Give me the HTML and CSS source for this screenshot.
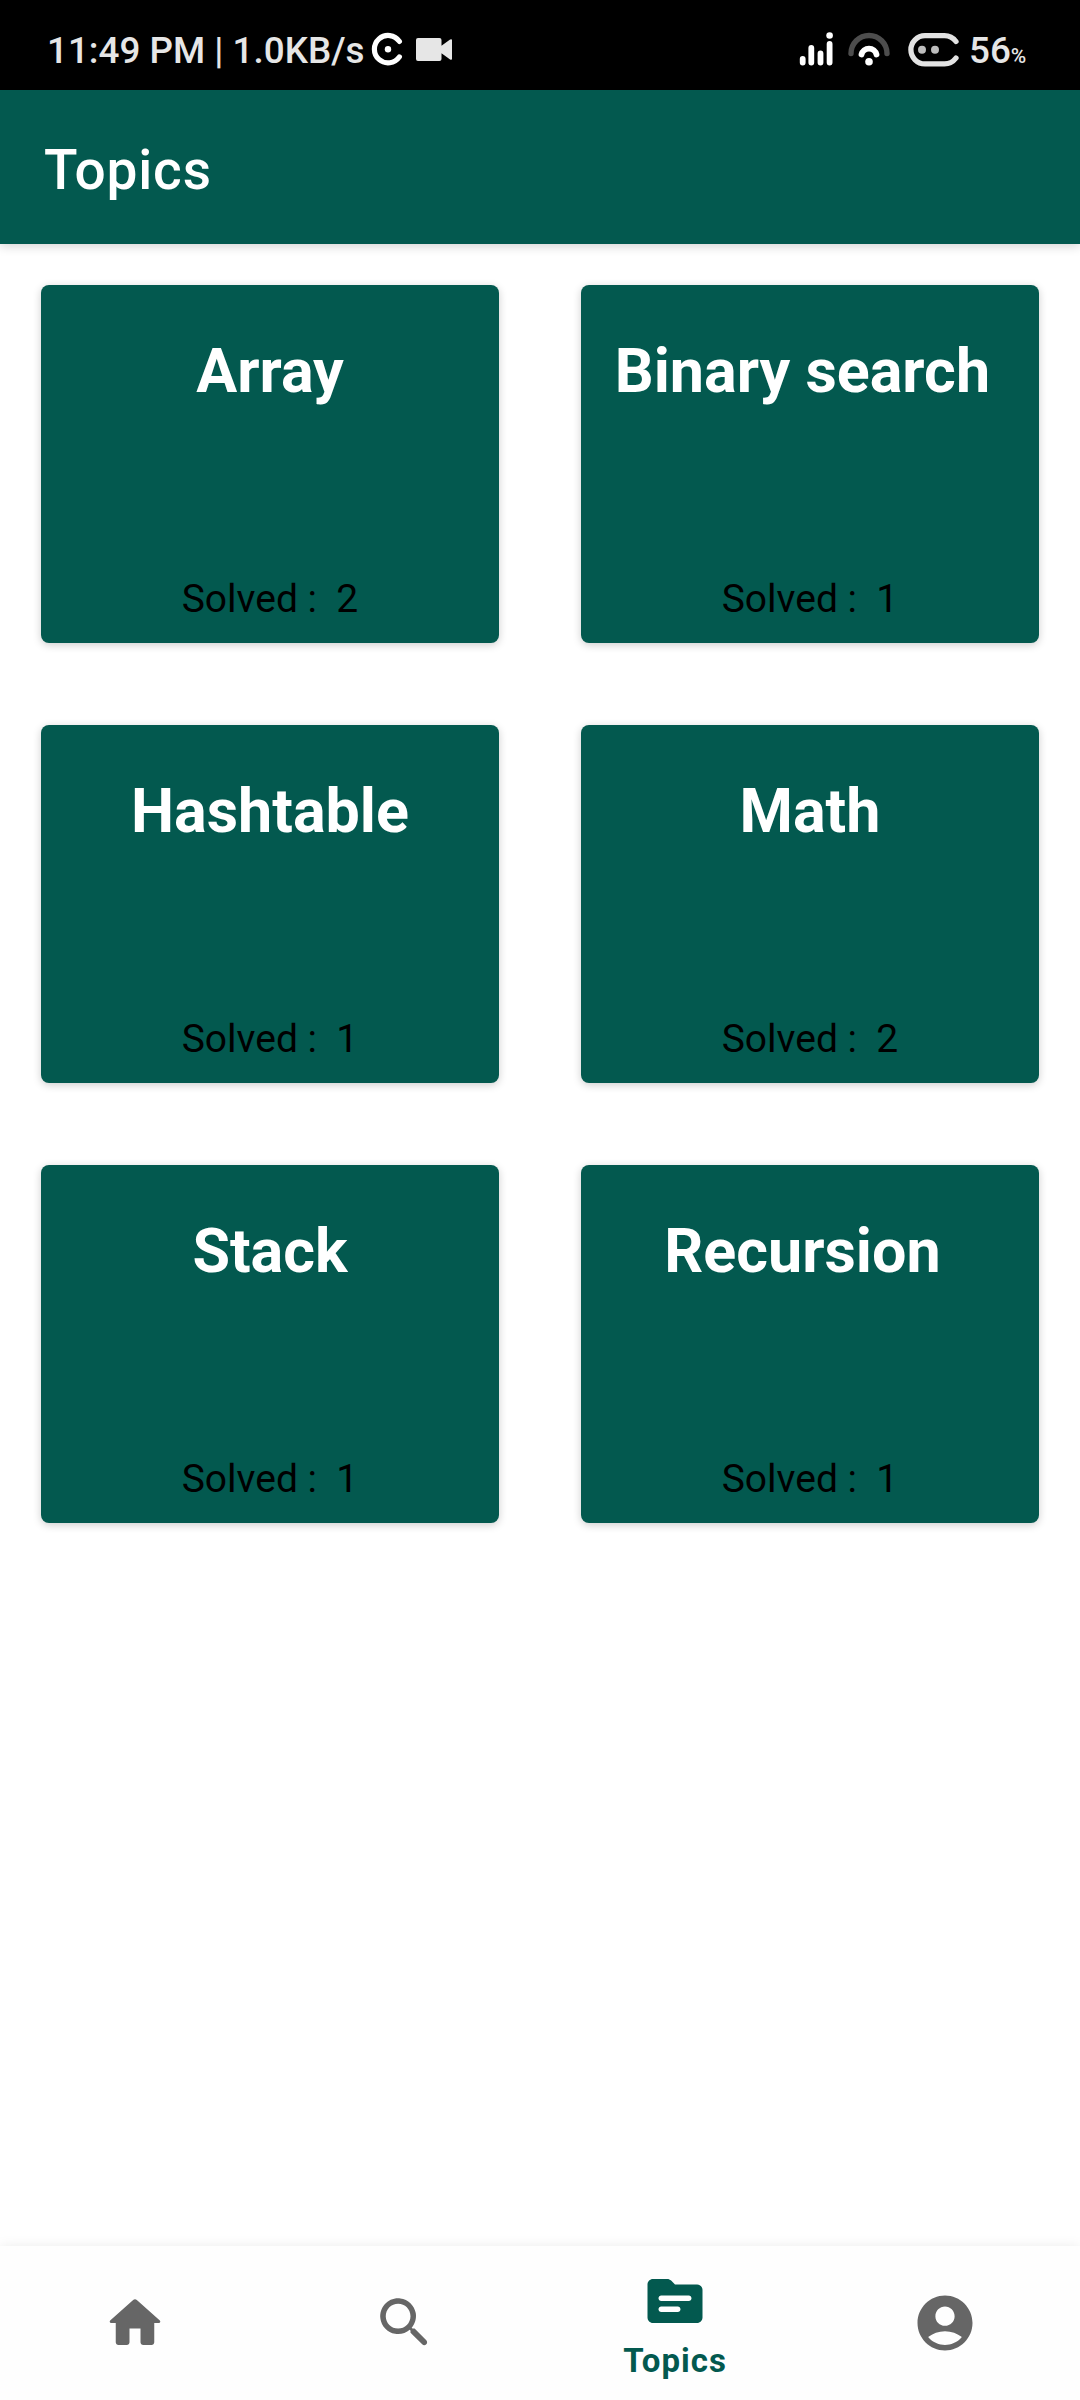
FILE: index.html
```html
<!DOCTYPE html>
<html lang="en">
<head>
<meta charset="utf-8">
<title>Topics</title>
<link rel="stylesheet" href="styles.css">
</head>
<body>
<div class="screen">
  <div class="status">
    <span class="status-text">11:49 PM | 1.0KB/s</span>
    <svg class="status-left" width="90" height="90" viewBox="368 0 90 90">
      <path d="M399.4 41.4A13.7 13.7 0 1 0 399.4 56.9" fill="none" stroke="#fff" stroke-width="5.2" stroke-linecap="round"/>
      <circle cx="388" cy="49.3" r="3.2" fill="#fff"/>
      <path d="M418 38h21.5a2 2 0 0 1 2 2v5.8l8.600-6.200q1.900-1.200 1.900.8v18.200q0 2-1.900.8l-8.600-6.200V59a2 2 0 0 1-2 2H418a2 2 0 0 1-2-2V40a2 2 0 0 1 2-2z" fill="#e6e6e6"/>
    </svg>
    <svg class="status-right" width="166" height="90" viewBox="796 0 166 90">
      <g stroke="#fff" stroke-width="5.8" stroke-linecap="round" fill="none">
        <path d="M802.7 59v3.500M811.3 48v14.500M820.5 53.500v9M829.6 44v18.500"/>
        <path d="M861.500 54.500a7.700 7.700 0 0 1 15 0"/>
        <path d="M851 53.500a18 18 0 0 1 36 0" stroke="#4d4d4d" stroke-width="5.400"/>
      </g>
      <circle cx="829.6" cy="35.500" r="3.300" fill="#fff"/>
      <circle cx="869" cy="61.700" r="3.800" fill="#fff"/>
      <path d="M956 41.500Q951.500 35.700 944.500 35.700H925a14 14 0 0 0 0 28.200H944.500Q951.500 63.900 956 58" fill="none" stroke="#e3e3e3" stroke-width="5.300" stroke-linecap="round"/>
      <circle cx="922" cy="49.800" r="4" fill="#bdbdbd"/>
      <circle cx="935" cy="49.800" r="4" fill="#bdbdbd"/>
    </svg>
    <span class="battery">56<span class="percent">%</span></span>
  </div>
  <header class="appbar"><h1 class="title">Topics</h1></header>
  <main class="grid">
    <section class="card"><h2 class="name">Array</h2><p class="solved">Solved :&nbsp; 2</p></section>
    <section class="card"><h2 class="name">Binary search&nbsp;</h2><p class="solved">Solved :&nbsp; 1</p></section>
    <section class="card"><h2 class="name">Hashtable</h2><p class="solved">Solved :&nbsp; 1</p></section>
    <section class="card"><h2 class="name">Math</h2><p class="solved">Solved :&nbsp; 2</p></section>
    <section class="card"><h2 class="name">Stack</h2><p class="solved">Solved :&nbsp; 1</p></section>
    <section class="card"><h2 class="name">Recursion&nbsp;</h2><p class="solved">Solved :&nbsp; 1</p></section>
  </main>
  <nav class="nav">
    <a class="tab"><svg class="icon" viewBox="0 0 24 24"><path d="M10 19v-5h4v5c0 .55.45 1 1 1h3c.55 0 1-.45 1-1v-7h1.700c.46 0 .68-.57.33-.87L12.670 3.600c-.38-.34-.96-.34-1.340 0l-8.360 7.530c-.34.3-.13.87.33.87H5v7c0 .55.45 1 1 1h3c.55 0 1-.45 1-1z"/></svg></a>
    <a class="tab"><svg class="icon" viewBox="0 0 24 24"><path d="M15.5 14h-.79l-.28-.27c1.200-1.400 1.820-3.310 1.480-5.340-.47-2.780-2.790-5-5.590-5.340-4.230-.52-7.790 3.040-7.270 7.270.34 2.800 2.560 5.120 5.340 5.590 2.030.34 3.940-.28 5.340-1.480l.27.28v.79l4.250 4.250c.41.41 1.080.41 1.490 0 .41-.41.41-1.080 0-1.490L15.5 14zm-6 0C7.010 14 5 11.990 5 9.500S7.010 5 9.500 5 14 7.010 14 9.500 11.990 14 9.500 14z"/></svg></a>
    <a class="tab active"><svg class="icon" viewBox="0 0 24 24"><path fill-rule="evenodd" d="M20 6h-8l-1.410-1.410C10.210 4.210 9.700 4 9.170 4H4c-1.100 0-2 .9-2 2v12c0 1.100.9 2 2 2h16c1.100 0 2-.9 2-2V8c0-1.100-.9-2-2-2zM13 16H7c-.55 0-1-.45-1-1s.45-1 1-1h6c.55 0 1 .45 1 1s-.45 1-1 1zM17 12H7c-.55 0-1-.45-1-1s.45-1 1-1h10c.55 0 1 .45 1 1s-.45 1-1 1z"/></svg><span class="label">Topics</span></a>
    <a class="tab"><svg class="icon" viewBox="0 0 24 24"><path fill-rule="evenodd" d="M12 2C6.480 2 2 6.480 2 12s4.480 10 10 10 10-4.480 10-10S17.520 2 12 2zm0 4c1.930 0 3.500 1.570 3.500 3.500S13.930 13 12 13s-3.500-1.570-3.500-3.500S10.070 6 12 6zm0 14c-2.030 0-4.430-.82-6.140-2.880C7.550 15.800 9.680 15 12 15s4.450.8 6.140 2.120C16.430 19.180 14.030 20 12 20z"/></svg></a>
  </nav>
</div>
</body>
</html>
```
FILE: styles.css
```css
* { box-sizing: border-box; margin: 0; padding: 0; }
body { background: #fff; font-family: Roboto, sans-serif; }
.screen { width: 1080px; height: 2400px; display: flex; flex-direction: column; overflow: hidden; }
.status { height: 90px; background: #000; color: #e6e6e6; display: flex; align-items: flex-start; padding-left: 47px; }
.status-text, .battery { font-size: 36.8px; font-weight: 500; line-height: 42px; padding-top: 30px; white-space: nowrap; }
.status-text { width: 321px; flex: none; }
.status-left, .status-right { flex: none; display: block; }
.status-right { margin-left: 338px; }
.battery { margin-left: 7px; }
.percent { font-size: 21px; }
.appbar { height: 154px; background: #03594f; color: #fff; display: flex; align-items: center; padding-left: 44px; box-shadow: 0 2px 10px rgba(0,0,0,.18); }
.title { font-size: 55px; font-weight: 500; line-height: 64px; letter-spacing: .8px; padding-top: 5px; }
.grid { flex: 1; display: grid; grid-template-columns: 458px 458px; grid-auto-rows: 358px; gap: 82px; padding: 41px; align-content: start; }
.card { background: #03594f; border-radius: 8px; box-shadow: 0 2px 8px rgba(0,0,0,.2); display: flex; flex-direction: column; align-items: center; justify-content: space-between; padding: 50px 0 21px; }
.name { color: #fff; font-size: 61px; font-weight: 700; line-height: 72px; white-space: nowrap; }
.solved { color: #000; font-size: 39px; line-height: 46px; white-space: nowrap; }
.nav { height: 154px; display: grid; grid-template-columns: repeat(4, 1fr); background: #fefefe; box-shadow: 0 0 12px rgba(0,0,0,.08); }
.tab { display: flex; flex-direction: column; align-items: center; justify-content: center; color: #666; }
.active { color: #03594f; justify-content: flex-start; padding-top: 22px; }
.icon { width: 66px; height: 66px; fill: currentColor; display: block; }
.label { font-size: 33px; font-weight: 700; line-height: 38px; margin-top: 8px; letter-spacing: 1px; }
```
